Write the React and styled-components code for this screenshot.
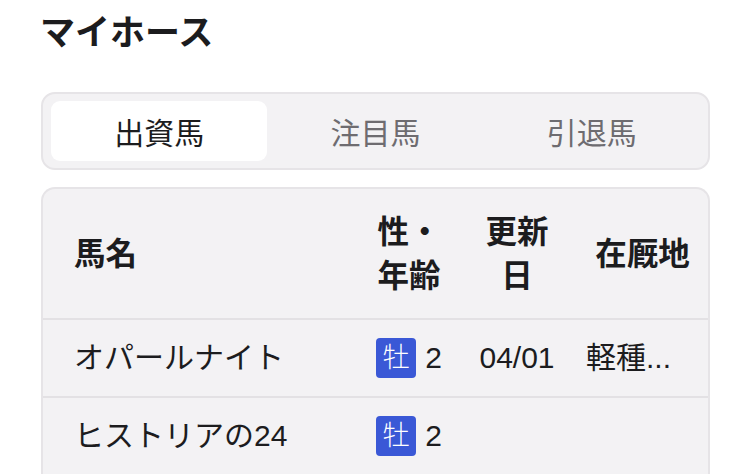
import React from "react";
import styled, { createGlobalStyle } from "styled-components";

const Global = createGlobalStyle`
  html, body { margin: 0; padding: 0; background: #ffffff; }
  body { font-family: "Liberation Sans", "Noto Sans CJK JP", sans-serif; color: #1c1c1e; }
  * { box-sizing: border-box; }
`;

const Page = styled.div`
  padding: 6px 40px 0 41px;
  width: 750px;
`;

const Title = styled.h1`
  margin: 0 0 0 -1px;
  font-size: 35px;
  font-weight: 700;
  line-height: 54px;
  color: #1c1c1e;
`;

const Tabs = styled.div`
  margin-top: 32px;
  display: grid;
  grid-template-columns: repeat(3, 1fr);
  padding: 7px 8px;
  background: #f3f2f4;
  border: 2px solid #e6e4e7;
  border-radius: 14px;
`;

const Tab = styled.div`
  height: 60px;
  display: flex;
  align-items: center;
  justify-content: center;
  font-size: 30px;
  border-radius: 9px;
  background: ${(p) => (p.$active ? "#ffffff" : "transparent")};
  color: ${(p) => (p.$active ? "#1c1c1e" : "#6e6c70")};
`;

const Card = styled.div`
  margin-top: 17px;
  background: #f3f2f4;
  border: 2px solid #e6e4e7;
  border-bottom: none;
  border-radius: 14px 14px 0 0;
  overflow: hidden;
`;

const Row = styled.div`
  display: grid;
  grid-template-columns: 318px 96px 120px 1fr;
  align-items: center;
  min-height: ${(p) => (p.$head ? "129px" : "78px")};
  border-top: ${(p) => (p.$head ? "none" : "2px solid #e3e1e4")};
`;

const HeadCell = styled.div`
  font-size: 31.5px;
  font-weight: 700;
  line-height: 44px;
  text-align: ${(p) => (p.$left ? "left" : "center")};
  padding: ${(p) => (p.$left ? "0 0 0 31px" : "0 15px")};
  color: #1c1c1e;
`;

const Cell = styled.div`
  font-size: 30px;
  line-height: 44px;
  color: #1c1c1e;
  display: flex;
  align-items: center;
  justify-content: ${(p) => (p.$align === "left" ? "flex-start" : "center")};
  padding: ${(p) => p.$pad || "0"};
  white-space: nowrap;
  overflow: hidden;
`;

const Badge = styled.span`
  display: inline-flex;
  align-items: center;
  justify-content: center;
  width: 40px;
  height: 40px;
  border-radius: 4px;
  background: #3a58d6;
  color: #ffffff;
  font-size: 27px;
  font-weight: 300;
  margin-right: 9px;
`;

const rows = [
  { name: "オパールナイト", sex: "牡", age: "2", date: "04/01", place: "軽種..." },
  { name: "ヒストリアの24", sex: "牡", age: "2", date: "", place: "" },
];

export default function App() {
  return (
    <>
      <Global />
      <Page>
        <Title>マイホース</Title>
        <Tabs>
          <Tab $active>出資馬</Tab>
          <Tab>注目馬</Tab>
          <Tab>引退馬</Tab>
        </Tabs>
        <Card>
          <Row $head>
            <HeadCell $left>馬名</HeadCell>
            <HeadCell>性・年齢</HeadCell>
            <HeadCell>更新日</HeadCell>
            <HeadCell>在厩地</HeadCell>
          </Row>
          {rows.map((r) => (
            <Row key={r.name}>
              <Cell $align="left" $pad="0 0 0 31px">{r.name}</Cell>
              <Cell>
                <Badge>{r.sex}</Badge>
                {r.age}
              </Cell>
              <Cell>{r.date}</Cell>
              <Cell $align="left" $pad="0 0 0 9px">{r.place}</Cell>
            </Row>
          ))}
        </Card>
      </Page>
    </>
  );
}
